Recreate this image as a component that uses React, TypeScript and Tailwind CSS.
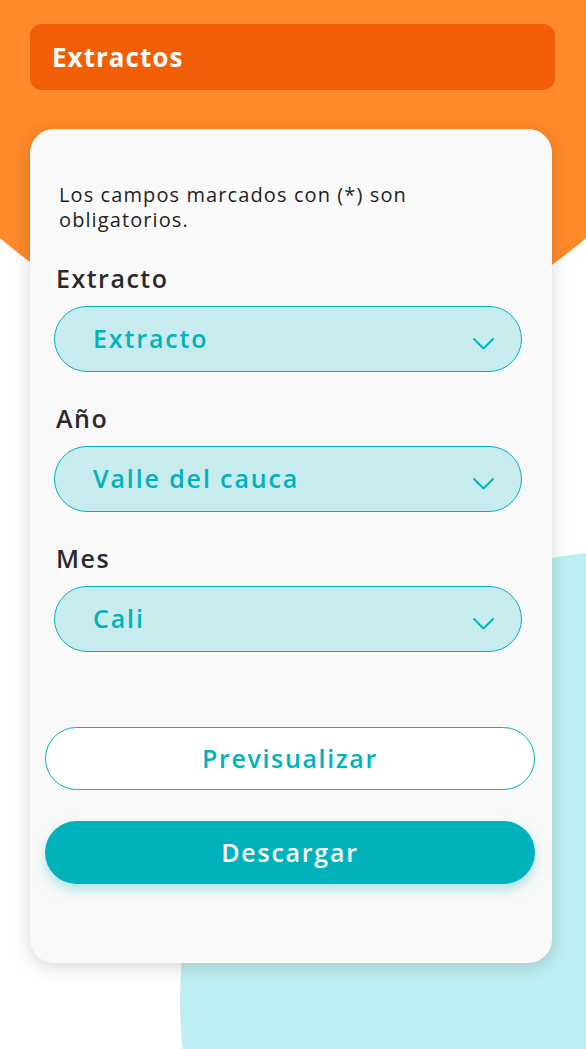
const fields = [
  { label: "Extracto", value: "Extracto" },
  { label: "Año", value: "Valle del cauca" },
  { label: "Mes", value: "Cali" },
];

const font = "[font-family:'Open_Sans','Liberation_Sans',sans-serif]";

const Chevron = () => (
  <svg width="21" height="12" viewBox="0 0 21 12" fill="none" className="mt-[9px]">
    <polyline points="1,1 10.5,10.5 20,1" stroke="#00b2bc" strokeWidth="1.8" strokeLinecap="round" strokeLinejoin="round" />
  </svg>
);

export default function App() {
  return (
    <div className={`relative w-full min-h-[1049px] overflow-hidden bg-white ${font}`}>
      {/* decorative blobs */}
      <div className="absolute left-[-152px] top-[-542px] w-[890px] h-[890px] rounded-full bg-[#fe8a2a]" />
      <div className="absolute left-[180px] top-[551px] w-[898px] h-[898px] rounded-full bg-[#bdeff2]" />

      <div className="relative flex flex-col px-[30px] pt-6 pb-[86px]">
        <header className="h-[66px] w-[525px] rounded-xl bg-[#f25e06] flex items-center px-[22px]">
          <h1 className="text-white font-bold text-[26px] leading-none tracking-[0.04em]">Extractos</h1>
        </header>

        <main className="mt-[39px] w-[522px] h-[834px] rounded-[24px] bg-[#f9f9f9] shadow-[0_4px_18px_rgba(0,0,0,0.16)] flex flex-col px-[24px] pt-[53px]">
          <p className="pl-[5px] pr-[90px] text-[20px] leading-[25px] tracking-[0.055em] text-[#1f1f1f]">
            Los campos marcados con (*) son obligatorios.
          </p>

          <div className="mt-[32px] flex flex-col gap-[32px]">
            {fields.map((f) => (
              <div key={f.label} className="flex flex-col gap-[14px]">
                <label className="pl-[2px] text-[25px] leading-[28px] font-semibold tracking-[0.06em] text-[#2a2a2e]">
                  {f.label}
                </label>
                <div className="h-[66px] w-[468px] rounded-full border-[1.5px] border-[#00b2bc] bg-[#c8ebed] flex items-center justify-between pl-[38px] pr-[27px]">
                  <span className="text-[25px] font-semibold tracking-[0.075em] text-[#00b2bc]">{f.value}</span>
                  <Chevron />
                </div>
              </div>
            ))}
          </div>

          <div className="mt-[75px] -mx-[9px] flex flex-col gap-[31px]">
            <button className="h-[63px] w-[490px] rounded-full border-[1.5px] border-[#00b2bc] bg-white text-[25px] font-semibold tracking-[0.065em] text-[#00b2bc]">
              Previsualizar
            </button>
            <button className="h-[63px] w-[490px] rounded-full bg-[#00b2bc] text-[25px] font-semibold tracking-[0.07em] text-white shadow-[0_6px_12px_rgba(0,178,188,0.3)]">
              Descargar
            </button>
          </div>
        </main>
      </div>
    </div>
  );
}
